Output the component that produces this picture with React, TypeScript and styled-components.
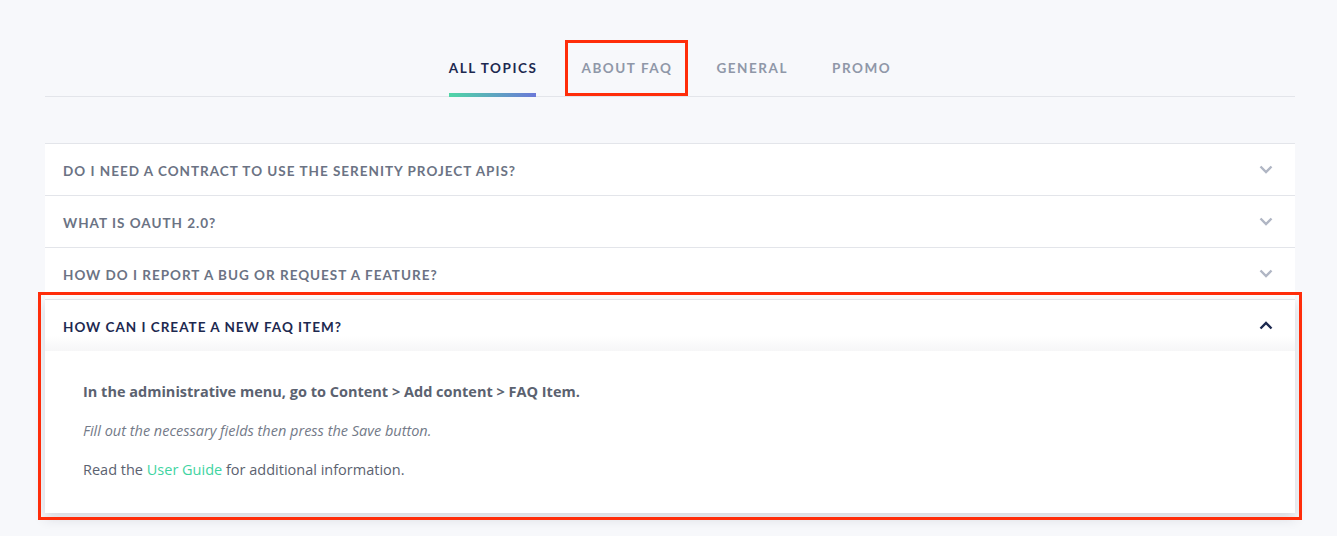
import React, { useState } from 'react';
import styled, { createGlobalStyle } from 'styled-components';

const GlobalStyle = createGlobalStyle`
  body {
    margin: 0;
    background: #f7f8fb;
    font-family: 'Open Sans', 'Liberation Sans', sans-serif;
  }
`;

const colors = {
  navy: '#1d2950',
  slate: '#6b7384',
  muted: '#8f97a8',
  body: '#5b6270',
  line: '#e3e5ea',
  mark: '#ff2d0a',
  green: '#3fd4a2',
};

const topics = ['All topics', 'About FAQ', 'General', 'Promo'];

const faqs = [
  'Do I need a contract to use the Serenity Project APIs?',
  'What is OAuth 2.0?',
  'How do I report a bug or request a feature?',
  'How can I create a new FAQ item?',
];

const Chevron: React.FC<{ up?: boolean; color: string }> = ({ up, color }) => (
  <svg width='14' height='9' viewBox='0 0 14 9' fill='none'>
    <path
      d={up ? 'M1.5 7.5L7 2l5.5 5.5' : 'M1.5 1.5L7 7l5.5-5.5'}
      stroke={color}
      strokeWidth='2.4'
    />
  </svg>
);

const App: React.FC = () => {
  const [active, setActive] = useState(0);
  const [open, setOpen] = useState(3);

  return (
    <>
      <GlobalStyle />
      <Page>
        <TabBar>
          {topics.map((t, i) => (
            <Tab
              key={t}
              $active={i === active}
              $marked={i === 1}
              onClick={() => setActive(i)}
            >
              {t}
            </Tab>
          ))}
        </TabBar>

        <Accordion>
          {faqs.map((q, i) => {
            const isOpen = i === open;
            return (
              <Item key={q} $open={isOpen}>
                <Header $open={isOpen} onClick={() => setOpen(isOpen ? -1 : i)}>
                  <Question $open={isOpen}>{q}</Question>
                  <Chevron up={isOpen} color={isOpen ? colors.navy : '#b0b6c4'} />
                </Header>
                {isOpen && (
                  <Answer>
                    <Strong>
                      In the administrative menu, go to Content &gt; Add content &gt; FAQ Item.
                    </Strong>
                    <Em>Fill out the necessary fields then press the Save button.</Em>
                    <Text>
                      Read the <Link href='#'>User Guide</Link> for additional information.
                    </Text>
                  </Answer>
                )}
              </Item>
            );
          })}
        </Accordion>
      </Page>
    </>
  );
};

const Page = styled.div`
  padding: 40px 42px 0 45px;
  min-height: 495px;
`;

const TabBar = styled.nav`
  display: flex;
  justify-content: center;
  gap: 12px;
  border-bottom: 1px solid ${colors.line};
  margin-bottom: 46px;
`;

const Tab = styled.div<{ $active: boolean; $marked: boolean }>`
  position: relative;
  height: 56px;
  padding: 0 16px;
  box-sizing: border-box;
  display: flex;
  align-items: center;
  font-family: Lato, 'Open Sans', sans-serif;
  font-weight: 700;
  font-size: 13.5px;
  letter-spacing: 1.55px;
  text-transform: uppercase;
  color: ${(p) => (p.$active ? colors.navy : colors.muted)};
  cursor: pointer;
  outline: ${(p) => (p.$marked ? `3px solid ${colors.mark}` : 'none')};
  outline-offset: -3px;
  &::after {
    content: '';
    display: ${(p) => (p.$active ? 'block' : 'none')};
    position: absolute;
    left: 16px;
    right: 17px;
    bottom: -1px;
    height: 4px;
    background: linear-gradient(90deg, #4fd6a6, #6b78d8);
  }
`;

const Accordion = styled.div`
  display: flex;
  flex-direction: column;
`;

const Item = styled.div<{ $open: boolean }>`
  background: #fff;
  border-top: 1px solid ${colors.line};
  box-shadow: ${(p) => (p.$open ? '0 5px 12px rgba(40, 45, 70, 0.16)' : 'none')};
  outline: ${(p) => (p.$open ? `3px solid ${colors.mark}` : 'none')};
  outline-offset: 4px;
`;

const Header = styled.div<{ $open: boolean }>`
  height: 51px;
  display: flex;
  align-items: center;
  justify-content: space-between;
  padding: 0 22px 0 18px;
  cursor: pointer;
  background: ${(p) =>
    p.$open ? 'linear-gradient(180deg, #fff 70%, #f6f6f7 100%)' : '#fff'};
`;

const Question = styled.span<{ $open: boolean }>`
  font-family: Lato, 'Open Sans', sans-serif;
  font-weight: 700;
  font-size: 13.5px;
  letter-spacing: 1px;
  text-transform: uppercase;
  color: ${(p) => (p.$open ? colors.navy : colors.slate)};
  padding-top: 2px;
`;

const Answer = styled.div`
  padding: 31px 38px 33px;
  display: flex;
  flex-direction: column;
  gap: 19px;
  font-size: 14.5px;
  line-height: 20px;
  color: ${colors.body};
`;

const Strong = styled.p`
  margin: 0;
  font-weight: 700;
`;

const Em = styled.p`
  margin: 0;
  font-style: italic;
  color: #737a88;
`;

const Text = styled.p`
  margin: 0;
`;

const Link = styled.a`
  color: ${colors.green};
  text-decoration: none;
`;

export default App;
